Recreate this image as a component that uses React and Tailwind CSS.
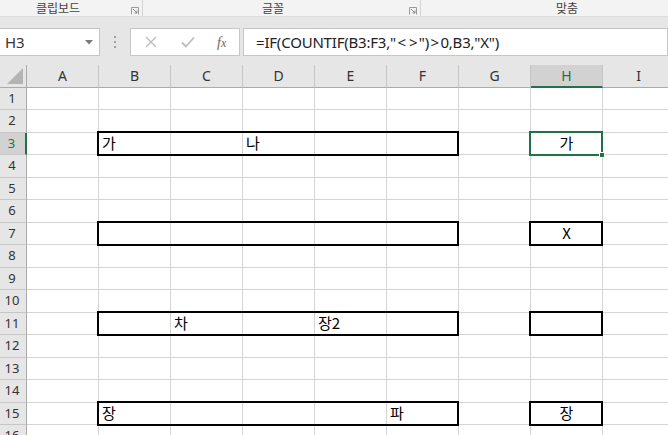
import React from 'react';

const COLS = ['A', 'B', 'C', 'D', 'E', 'F', 'G', 'H', 'I'];
const ROWS = Array.from({ length: 16 }, (_, i) => i + 1);

// cell values; H column is centered
const DATA = {
  3: { B: '가', D: '나', H: '가' },
  7: { H: 'X' },
  11: { C: '차', E: '장2' },
  15: { B: '장', F: '파', H: '장' },
};

// thick black outlines: [row, firstCol, span]
const BOXES = [
  [3, 1, 5], [7, 1, 5], [11, 1, 5], [15, 1, 5],
  [7, 7, 1], [11, 7, 1], [15, 7, 1],
];

const ROW_H = 22.5;
const COL_W = 72;
const HEAD_W = 27;

const cjk = { fontFamily: '"Noto Sans CJK KR", "Noto Sans", sans-serif' };
const ui = { fontFamily: '"Noto Sans", "Noto Sans CJK KR", sans-serif' };

function Launcher() {
  return (
    <svg width="8" height="8" viewBox="0 0 8 8" className="ml-auto mr-[3px] mt-[7px]">
      <path d="M0.5 0.5h7v7" fill="none" stroke="#9a9a9a" strokeWidth="1" />
      <path d="M0.5 7.5v-7" fill="none" stroke="#9a9a9a" strokeWidth="1" />
      <path d="M2 2l4 4M6 3.5V6H3.5" fill="none" stroke="#8a8a8a" strokeWidth="1" />
    </svg>
  );
}

function Ribbon() {
  return (
    <div className="flex h-[17px] border-b border-[#dcdcdc] bg-[#f3f3f3] text-[12px] leading-[16px] text-[#444]" style={cjk}>
      <div className="flex w-[143px] shrink-0 border-r border-[#d4d4d4]">
        <span className="ml-[36px]">클립보드</span>
        <Launcher />
      </div>
      <div className="flex w-[278px] shrink-0 border-r border-[#d4d4d4]">
        <span className="ml-[119px]">글꼴</span>
        <Launcher />
      </div>
      <div className="flex flex-1">
        <span className="ml-[135px]">맞춤</span>
      </div>
    </div>
  );
}

function FormulaBar() {
  return (
    <div className="flex h-[28px] items-stretch mt-[11px]">
      <div className="-ml-px flex w-[101px] shrink-0 items-center border border-[#c6c6c6] bg-white pl-[5px] pr-[6px]">
        <span className="text-[15px] text-[#333]" style={ui}>H3</span>
        <svg width="8" height="5" viewBox="0 0 8 5" className="ml-auto">
          <path d="M0 0h8L4 4.5z" fill="#7a7a7a" />
        </svg>
      </div>
      <div className="flex w-[30px] shrink-0 flex-col items-center justify-center gap-[3px]">
        <span className="h-[2px] w-[2px] bg-[#a0a0a0]" />
        <span className="h-[2px] w-[2px] bg-[#a0a0a0]" />
        <span className="h-[2px] w-[2px] bg-[#a0a0a0]" />
      </div>
      <div className="flex w-[110px] shrink-0 items-center border border-[#c6c6c6] bg-white">
        <svg width="12" height="12" viewBox="0 0 12 12" className="ml-[14px]">
          <path d="M1 1l10 10M11 1L1 11" stroke="#bdbdbd" strokeWidth="1.4" />
        </svg>
        <svg width="14" height="12" viewBox="0 0 14 12" className="ml-[24px]">
          <path d="M1 6.5l4 4L13 1.5" fill="none" stroke="#bdbdbd" strokeWidth="1.8" />
        </svg>
        <span className="ml-[22px] text-[14px] italic text-[#666]" style={{ fontFamily: '"Liberation Serif", serif' }}>
          f<span className="text-[12px]">x</span>
        </span>
      </div>
      <div className="ml-[3px] flex flex-1 items-center border border-[#c6c6c6] bg-white pl-[12px]">
        <span className="whitespace-pre text-[15px] tracking-[-0.2px] text-[#222]" style={ui}>
          =IF(COUNTIF(B3:F3,"<span className="px-[1.5px]">&lt;</span><span className="px-[1.5px]">&gt;</span>")<span className="px-[1.5px]">&gt;</span>0,B3,"X")
        </span>
      </div>
    </div>
  );
}

function ColumnHeader() {
  return (
    <div className="mt-[9px] flex h-[22.5px] text-[14px] text-[#333]" style={ui}>
      <div className="relative w-[27px] shrink-0 border-b border-r border-[#ababab]">
        <svg width="16" height="16" viewBox="0 0 16 16" className="absolute bottom-[3px] right-[3px]">
          <path d="M16 0V16H0z" fill="#b4b4b4" />
        </svg>
      </div>
      {COLS.map((c) => (
        <div
          key={c}
          className={
            c === 'H'
              ? 'flex w-[72px] shrink-0 items-center justify-center border-b-2 border-r border-b-[#217346] border-r-[#c6c6c6] bg-[#d2d2d2] text-[#217346]'
              : 'flex w-[72px] shrink-0 items-center justify-center border-b border-r border-b-[#ababab] border-r-[#c6c6c6]'
          }
        >
          {c}
        </div>
      ))}
    </div>
  );
}

function Row({ r }) {
  const vals = DATA[r] || {};
  return (
    <div className="flex h-[22.5px]">
      <div
        className={
          r === 3
            ? 'flex w-[27px] shrink-0 items-center justify-center border-b border-r-2 border-b-[#c6c6c6] border-r-[#217346] bg-[#d2d2d2] pr-[2px] text-[13px] text-[#217346]'
            : 'flex w-[27px] shrink-0 items-center justify-center border-b border-r border-b-[#c6c6c6] border-r-[#ababab] bg-[#e6e6e6] pr-[2px] text-[13px] text-[#333]'
        }
        style={ui}
      >
        {r}
      </div>
      {COLS.map((c) => (
        <div
          key={c}
          className={
            c === 'H'
              ? 'flex w-[72px] shrink-0 items-end justify-center border-b border-r border-[#d4d4d4] pb-[2px] text-[15px] leading-[18px] text-black'
              : 'flex w-[72px] shrink-0 items-end whitespace-nowrap border-b border-r border-[#d4d4d4] pb-[2px] pl-[3px] text-[15px] leading-[18px] text-black'
          }
          style={cjk}
        >
          {vals[c]}
        </div>
      ))}
    </div>
  );
}

export default function App() {
  return (
    <div className="h-[435px] w-[668px] overflow-hidden bg-[#e6e6e6]">
      <Ribbon />
      <FormulaBar />
      <ColumnHeader />
      <div className="relative bg-white">
        {ROWS.map((r) => (
          <Row key={r} r={r} />
        ))}
        {BOXES.map(([r, c, span]) => (
          <div
            key={`${r}-${c}`}
            className="pointer-events-none absolute border-2 border-black"
            style={{
              top: ROW_H * (r - 1) - 2,
              left: HEAD_W + COL_W * c - 2,
              width: COL_W * span + 2,
              height: ROW_H + 2.5,
            }}
          />
        ))}
        {/* active cell H3 */}
        <div
          className="pointer-events-none absolute border-2 border-[#217346]"
          style={{ top: ROW_H * 2 - 2, left: HEAD_W + COL_W * 7 - 2, width: COL_W + 2, height: ROW_H + 2.5 }}
        >
          <span className="absolute -bottom-[4px] -right-[4px] h-[6px] w-[6px] border border-white bg-[#217346]" />
        </div>
      </div>
    </div>
  );
}
